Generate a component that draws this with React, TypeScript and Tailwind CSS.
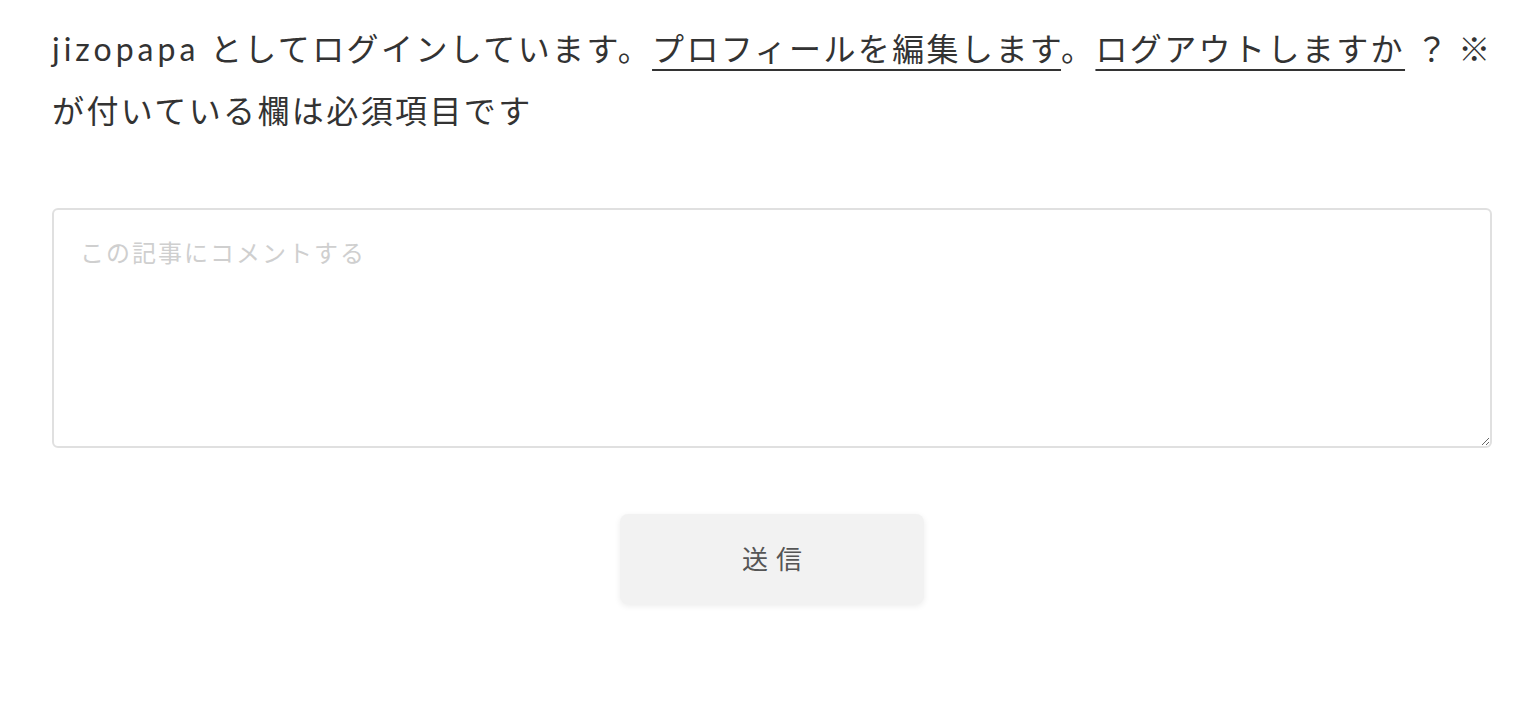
export default function App() {
  return (
    <div className="min-h-screen bg-white w-full">
      <div
        className="pl-[52px] pr-[22px] pt-[18px] text-[#333]"
        style={{ fontFamily: 'Lato, "Noto Sans CJK JP", sans-serif' }}
      >
        {/* Logged-in notice */}
        <p className="mr-[-16px] text-[32px] leading-[62px] tracking-[2.4px]">
          <span className="tracking-[4px]">jizopapa</span> としてログインしています。
          <a href="#" className="underline decoration-2 underline-offset-[8px]">
            プロフィールを編集します
          </a>
          。
          <a href="#" className="underline decoration-2 underline-offset-[8px]">
            ログアウトしますか
          </a>
          {' '}？<span className="tracking-normal"> </span>※ が付いている欄は必須項目です
        </p>

        {/* Comment form */}
        <form className="mt-[66px] flex flex-col items-center">
          <textarea
            placeholder="この記事にコメントする"
            className="w-full h-[240px] border-2 border-[#e0e0e0] rounded-[6px] px-[26px] py-[25px] text-[24px] tracking-[2px] placeholder:text-[#cfcfcf] outline-none"
          />
          <button
            type="button"
            className="mt-[66px] w-[304px] h-[90px] bg-[#f2f2f2] rounded-[8px] shadow-[0_2px_6px_rgba(0,0,0,0.08)] pl-[8px] text-[26px] tracking-[8px] text-[#555]"
          >
            送信
          </button>
        </form>
      </div>
    </div>
  );
}
